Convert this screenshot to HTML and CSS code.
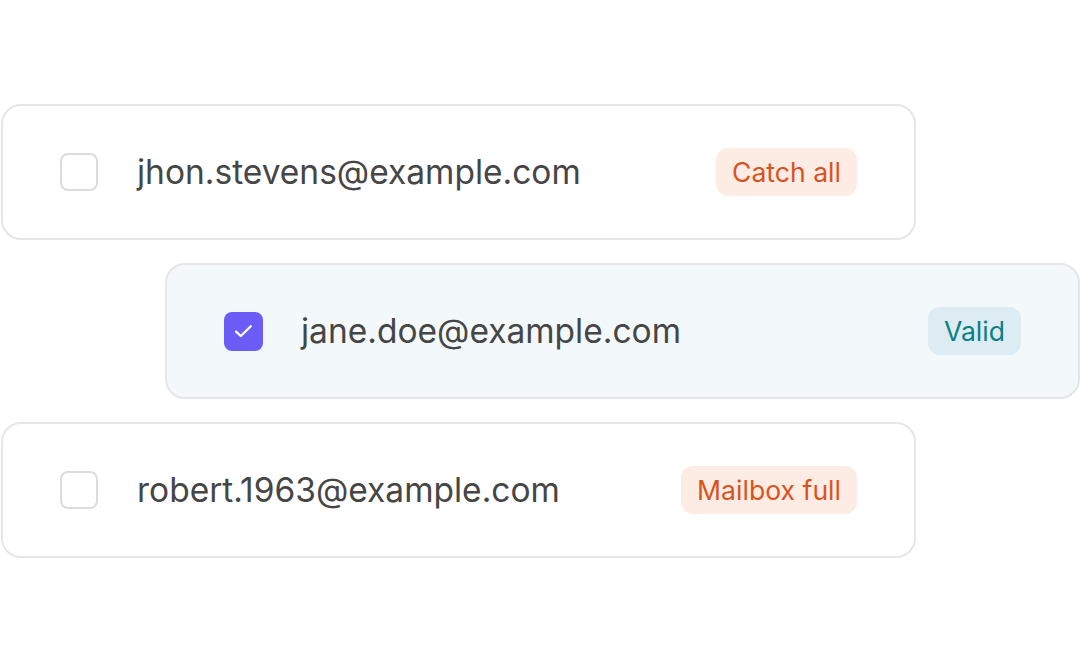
FILE: index.html
```html
<!DOCTYPE html>
<html lang="en">
<head>
    <meta charset="UTF-8">
    <meta name="viewport" content="width=device-width, initial-scale=1.0">
    <title>Email Verification List</title>
    <link rel="stylesheet" href="styles.css">
</head>
<body>
    <div class="list">
        <!-- Each row: checkbox, address, status badge -->
        <div class="row">
            <span class="check"></span>
            <span class="email">jhon.stevens@example.com</span>
            <span class="badge badge-warn">Catch all</span>
        </div>
        <div class="row row-selected">
            <span class="check check-on">
                <svg width="39" height="39" viewBox="0 0 39 39" fill="none">
                    <path d="M12 19.6l4.8 4.4 10-9.8" stroke="#fff" stroke-width="2.3" stroke-linecap="round" stroke-linejoin="round"/>
                </svg>
            </span>
            <span class="email">jane.doe@example.com</span>
            <span class="badge badge-ok">Valid</span>
        </div>
        <div class="row">
            <span class="check"></span>
            <span class="email">robert.1963@example.com</span>
            <span class="badge badge-warn">Mailbox full</span>
        </div>
    </div>
</body>
</html>
```

FILE: styles.css
```css
body {
    margin: 0;
    font-family: Inter, "Noto Sans", sans-serif;
    background: #fff;
}
.list {
    display: flex;
    flex-direction: column;
    gap: 23px;
    padding: 104px 0 0 1px;
}
.row {
    display: flex;
    align-items: center;
    box-sizing: border-box;
    width: 915px;
    height: 136px;
    padding: 0 57px 0 57px;
    border: 2px solid #e6e6e6;
    border-radius: 20px;
    background: #fff;
}
.row-selected {
    margin-left: 164px;
    background: #f3f9fb;
}
.check {
    box-sizing: border-box;
    flex: none;
    width: 38px;
    height: 38px;
    border: 2px solid #dcdcdc;
    border-radius: 8px;
    display: flex;
    align-items: center;
    justify-content: center;
}
.check-on {
    width: 39px;
    height: 39px;
    border: none;
    background: #6b5cf6;
}
.email {
    flex: 1;
    margin-left: 39px;
    font-size: 33.5px;
    color: #464646;
}
.check-on + .email {
    margin-left: 38px;
}
.badge {
    padding: 0 16px;
    height: 48px;
    line-height: 48px;
    border-radius: 12px;
    font-size: 26.6px;
}
.badge-warn {
    background: #fdece4;
    color: #d9531e;
}
.badge-ok {
    background: #dcecf2;
    color: #0d7f88;
}
```
